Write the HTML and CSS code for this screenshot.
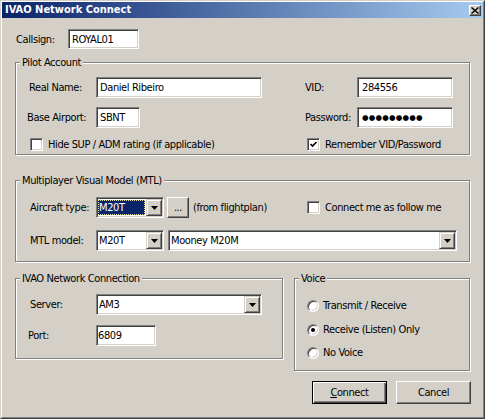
FILE: index.html
```html
<!DOCTYPE html>
<html>
<head>
<meta charset="utf-8">
<link rel="stylesheet" href="styles.css">
</head>
<body>
<div class="window">
  <div class="frame">
    <div class="titlebar">
      <span class="title">IVAO Network Connect</span>
      <span class="close"><svg width="8" height="7" viewBox="0 0 8 7"><path d="M0.5 0.5 L7.5 6.5 M7.5 0.5 L0.5 6.5" stroke="#000" stroke-width="1.4" fill="none"/></svg></span>
    </div>
    <div class="content">
      <div class="callsign-row">
        <span class="lbl lbl-callsign">Callsign:</span>
        <div class="field w-callsign">ROYAL01</div>
      </div>

      <div class="group group-pilot">
        <div class="legend">Pilot Account</div>
        <div class="row row-first">
          <div class="col-left">
            <span class="lbl">Real Name:</span>
            <div class="field w-realname">Daniel Ribeiro</div>
          </div>
          <div class="col-right">
            <span class="lbl lbl-r">VID:</span>
            <div class="field w-vid">284556</div>
          </div>
        </div>
        <div class="row row-second">
          <div class="col-left">
            <span class="lbl lbl-wide">Base Airport:</span>
            <div class="field w-airport">SBNT</div>
          </div>
          <div class="col-right">
            <span class="lbl lbl-r">Password:</span>
            <div class="field w-vid"><span class="dots">●●●●●●●●●</span></div>
          </div>
        </div>
        <div class="row row-checks">
          <div class="col-left col-check">
            <span class="check"><span class="box"></span><span>Hide SUP / ADM rating (if applicable)</span></span>
          </div>
          <div class="col-right col-check-r">
            <span class="check"><span class="box"><svg width="9" height="9" viewBox="0 0 9 9"><path d="M1.5 4 L3.5 6 L7.5 2" stroke="#000" stroke-width="1.6" fill="none"/></svg></span><span>Remember VID/Password</span></span>
          </div>
        </div>
      </div>

      <div class="group group-mtl">
        <div class="legend">Multiplayer Visual Model (MTL)</div>
        <div class="row mtl-first">
          <div class="col-left">
            <span class="lbl lbl-m">Aircraft type:</span>
            <div class="combo w-type">
              <span class="combo-val sel">M20T</span>
              <span class="combo-btn"><svg width="7" height="4" viewBox="0 0 7 4"><polygon points="0,0 7,0 3.5,4" fill="#000"/></svg></span>
            </div>
            <span class="btn-small">...</span>
            <span class="hint">(from flightplan)</span>
          </div>
          <div class="col-right col-check-r">
            <span class="check"><span class="box"></span><span>Connect me as follow me</span></span>
          </div>
        </div>
        <div class="row mtl-second">
          <span class="lbl lbl-m">MTL model:</span>
          <div class="combo w-type">
            <span class="combo-val">M20T</span>
            <span class="combo-btn"><svg width="7" height="4" viewBox="0 0 7 4"><polygon points="0,0 7,0 3.5,4" fill="#000"/></svg></span>
          </div>
          <div class="combo w-model">
            <span class="combo-val">Mooney M20M</span>
            <span class="combo-btn"><svg width="7" height="4" viewBox="0 0 7 4"><polygon points="0,0 7,0 3.5,4" fill="#000"/></svg></span>
          </div>
        </div>
      </div>

      <div class="bottom">
        <div class="group group-ivao">
          <div class="legend">IVAO Network Connection</div>
          <div class="row ivao-first">
            <span class="lbl lbl-m">Server:</span>
            <div class="combo w-server">
              <span class="combo-val">AM3</span>
              <span class="combo-btn"><svg width="7" height="4" viewBox="0 0 7 4"><polygon points="0,0 7,0 3.5,4" fill="#000"/></svg></span>
            </div>
          </div>
          <div class="row ivao-second">
            <span class="lbl lbl-port">Port:</span>
            <div class="field w-port">6809</div>
          </div>
        </div>
        <div class="right-col">
          <div class="group group-voice">
            <div class="legend">Voice</div>
            <div class="radios">
              <span class="opt"><span class="radio"></span><span>Transmit / Receive</span></span>
              <span class="opt"><span class="radio on"></span><span>Receive (Listen) Only</span></span>
              <span class="opt"><span class="radio"></span><span>No Voice</span></span>
            </div>
          </div>
          <div class="buttons">
            <span class="btn default"><span><span class="u">C</span>onnect</span></span>
            <span class="btn">Cancel</span>
          </div>
        </div>
      </div>
    </div>
  </div>
</div>
</body>
</html>
```

FILE: styles.css
```css
* { box-sizing: border-box; }
html, body { margin: 0; padding: 0; }
body {
  width: 485px;
  height: 419px;
  background: #D4D0C8;
  font-family: "DejaVu Sans Condensed", "Liberation Sans", sans-serif;
  font-size: 11px;
  line-height: 13px;
  letter-spacing: -0.4px;
  color: #000;
  overflow: hidden;
}
.window {
  width: 485px;
  height: 419px;
  border: 1px solid;
  border-color: #D4D0C8 #404040 #404040 #D4D0C8;
}
.frame {
  height: 100%;
  border: 1px solid;
  border-color: #FFFFFF #808080 #808080 #FFFFFF;
  background: #D4D0C8;
}
.titlebar {
  height: 16px;
  background: linear-gradient(to right, #0A246A, #A6CAF0);
  display: flex;
  align-items: center;
  justify-content: space-between;
  padding: 0 2px 0 3px;
  color: #FFFFFF;
  font-weight: bold;
  letter-spacing: 0;
}
.title { line-height: 16px; white-space: nowrap; }
.close {
  width: 12px;
  height: 11px;
  background: #D4D0C8;
  border: 1px solid;
  border-color: #FFFFFF #404040 #404040 #FFFFFF;
  box-shadow: inset -1px -1px #808080;
  display: flex;
  align-items: center;
  justify-content: center;
}
.close svg { display: block; }

.content { padding: 11px 0 0 13px; }

.lbl { white-space: nowrap; flex: none; }
.callsign-row { display: flex; align-items: center; margin-left: 1px; }
.lbl-callsign { width: 52px; }

.field {
  height: 21px;
  background: #FFFFFF;
  border: 1px solid;
  border-color: #808080 #FFFFFF #FFFFFF #808080;
  box-shadow: inset 1px 1px #404040, inset -1px -1px #D4D0C8;
  padding: 0 3px;
  display: flex;
  align-items: center;
  white-space: nowrap;
  overflow: hidden;
  flex: none;
}
.w-callsign { width: 71px; height: 20px; }
.w-realname { width: 166px; }
.w-vid { width: 96px; padding-left: 4px; }
.w-airport { width: 44px; }
.w-port { width: 60px; padding-left: 1px; }
.dots { font-family: "DejaVu Sans", sans-serif; font-size: 7.5px; line-height: 8px; letter-spacing: 0.2px; }

.group {
  border: 1px solid #808080;
  box-shadow: inset 1px 1px #FFFFFF, 1px 1px #FFFFFF;
  padding-left: 13px;
}
.legend {
  width: max-content;
  margin: -7px 0 0 -9px;
  padding: 0 2px;
  background: #D4D0C8;
  line-height: 13px;
  white-space: nowrap;
}
.group-pilot { width: 455px; margin-top: 13px; padding-bottom: 3px; }
.group-mtl { width: 455px; margin-top: 25px; padding-bottom: 10px; }

.row { display: flex; align-items: center; }
.col-left { width: 276px; display: flex; align-items: center; flex: none; }
.col-right { display: flex; align-items: center; }
.col-left .lbl { width: 67px; }
.col-left .lbl-wide { width: 69px; margin-left: -2px; }
.lbl-r { width: 52px; }
.row-first { margin-top: 8px; }
.row-second { margin-top: 9px; }
.row-checks { margin-top: 10px; height: 13px; }
.col-check { padding-left: 1px; }
.col-check-r { padding-left: 2px; }

.check { display: flex; align-items: center; gap: 5px; white-space: nowrap; }
.box {
  width: 13px;
  height: 13px;
  flex: none;
  background: #FFFFFF;
  border: 1px solid;
  border-color: #808080 #FFFFFF #FFFFFF #808080;
  box-shadow: inset 1px 1px #404040, inset -1px -1px #D4D0C8;
  display: flex;
  align-items: center;
  justify-content: center;
}
.box svg { display: block; }

.mtl-first { margin-top: 10px; }
.mtl-second { margin-top: 12px; }
.lbl-m, .col-left .lbl-m { width: 66px; margin-left: 1px; }

.combo {
  height: 21px;
  background: #FFFFFF;
  border: 1px solid;
  border-color: #808080 #FFFFFF #FFFFFF #808080;
  box-shadow: inset 1px 1px #404040, inset -1px -1px #D4D0C8;
  padding: 1px;
  display: flex;
  flex: none;
}
.combo-val {
  flex: 1;
  display: flex;
  align-items: center;
  padding-left: 1px;
  white-space: nowrap;
  overflow: hidden;
}
.combo-val.sel {
  margin: 1px 1px 1px 0;
  background: #0A246A;
  color: #FFFFFF;
  outline: 1px dotted #E6E0A0;
  outline-offset: -1px;
}
.combo-btn {
  width: 16px;
  height: 17px;
  flex: none;
  background: #D4D0C8;
  border: 1px solid;
  border-color: #D4D0C8 #404040 #404040 #D4D0C8;
  box-shadow: inset 1px 1px #FFFFFF, inset -1px -1px #808080;
  display: flex;
  align-items: center;
  justify-content: center;
}
.combo-btn svg { display: block; }
.w-type { width: 68px; }
.w-model { width: 289px; margin-left: 4px; }
.w-server { width: 166px; }

.btn-small {
  width: 22px;
  height: 21px;
  margin-left: 3px;
  flex: none;
  background: #D4D0C8;
  border: 1px solid;
  border-color: #FFFFFF #404040 #404040 #FFFFFF;
  box-shadow: inset -1px -1px #808080;
  display: flex;
  align-items: center;
  justify-content: center;
  padding-bottom: 1px;
}
.hint { margin-left: 4px; white-space: nowrap; }

.bottom { display: flex; align-items: flex-start; margin-top: 16px; }
.group-ivao { width: 268px; padding-bottom: 12px; }
.ivao-first { margin-top: 9px; }
.ivao-second { margin-top: 10px; }
.lbl-port { width: 68px; margin-left: -1px; }

.right-col { width: 177px; margin-left: 11px; }
.group-voice { width: 176px; padding-left: 12px; padding-bottom: 11px; }
.group-voice .legend { margin-left: -8px; }
.radios { display: flex; flex-direction: column; margin-top: 14px; }
.opt { display: flex; align-items: center; gap: 4px; height: 13px; white-space: nowrap; }
.opt + .opt { margin-top: 11px; }
.opt:last-child { margin-top: 10px; }
.radio {
  width: 12px;
  height: 12px;
  flex: none;
  border-radius: 50%;
  background: #FFFFFF;
  border: 1px solid;
  border-color: #808080 #FFFFFF #FFFFFF #808080;
  box-shadow: inset 1px 1px #404040, inset -1px -1px #D4D0C8;
  display: flex;
  align-items: center;
  justify-content: center;
}
.radio.on::after {
  content: "";
  width: 4px;
  height: 4px;
  border-radius: 50%;
  background: #000;
}

.buttons { display: flex; justify-content: flex-end; gap: 9px; margin-top: 10px; }
.btn {
  width: 75px;
  height: 23px;
  background: #D4D0C8;
  border: 1px solid;
  border-color: #FFFFFF #404040 #404040 #FFFFFF;
  box-shadow: inset -1px -1px #808080;
  display: flex;
  align-items: center;
  justify-content: center;
}
.btn.default {
  border-color: #000;
  box-shadow: inset 1px 1px #FFFFFF, inset -1px -1px #404040, inset -2px -2px #808080;
}
.u { text-decoration: underline; }
```
